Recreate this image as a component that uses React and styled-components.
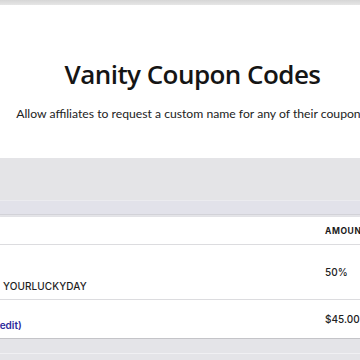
import React from 'react'
import styled, { createGlobalStyle } from 'styled-components'

const Global = createGlobalStyle`
    html, body {
        margin: 0;
        padding: 0;
        background: #e4e4e8;
        overflow: hidden;
    }
    body {
        width: 360px;
        height: 360px;
        font-family: "Open Sans", "Noto Sans", sans-serif;
        color: #1b1b1b;
    }
`

const rows = [
    { name: 'YOURLUCKYDAY', amount: '50%' },
    { name: '(edit)', amount: '$45.00', link: true },
]

function App() {
    return (
        <Page>
            <Global />
            <TopStrip />
            <Hero>
                <Title>Vanity Coupon Codes</Title>
                <Lead>Allow affiliates to request a custom name for any of their coupons.</Lead>
            </Hero>
            <Band />
            <SubBand />
            <Card>
                <HeadRow>
                    <NameCell />
                    <AmountHead>Amount</AmountHead>
                </HeadRow>
                <CodeRow>
                    <NameCell $top={29}>
                        <Code>{rows[0].name}</Code>
                    </NameCell>
                    <AmountCell $top={21}>{rows[0].amount}</AmountCell>
                </CodeRow>
                <EditRow>
                    <NameCell $top={13}>
                        <EditLink>{rows[1].name}</EditLink>
                    </NameCell>
                    <AmountCell $top={13}>{rows[1].amount}</AmountCell>
                </EditRow>
            </Card>
            <Footer>
                <FooterLine />
            </Footer>
        </Page>
    )
}

export default App

const Page = styled.div`
    display: flex;
    flex-direction: column;
    width: 360px;
    height: 360px;
    overflow: hidden;
`

const TopStrip = styled.div`
    height: 5px;
    flex-shrink: 0;
    background: linear-gradient(#d6d6d6, #e6e6e6);
`

const Hero = styled.div`
    width: 385px;
    height: 153px;
    flex-shrink: 0;
    background: #fff;
    display: flex;
    flex-direction: column;
    align-items: center;
    padding-top: 52px;
    box-sizing: border-box;
`

const Title = styled.h1`
    margin: 0;
    font-size: 26px;
    font-weight: 600;
    line-height: 34px;
    letter-spacing: -0.55px;
    color: #151515;
    white-space: nowrap;
`

const Lead = styled.p`
    margin: 15px 0 0;
    white-space: nowrap;
    font-family: Lato, "Open Sans", sans-serif;
    font-size: 12.2px;
    line-height: 16px;
    color: #222;
`

const Band = styled.div`
    height: 42px;
    flex-shrink: 0;
    background: #e4e4e7;
`

const SubBand = styled.div`
    height: 15px;
    flex-shrink: 0;
    background: #e2e2ea;
    border-top: 1px solid #ebebef;
    border-bottom: 1px solid #d2d2d8;
    box-sizing: border-box;
`

const Card = styled.div`
    flex-shrink: 0;
    background: #fff;
    margin-top: 2px;
    border-bottom: 1px solid #c4c4c8;
    box-shadow: 0 1px 2px rgba(0, 0, 0, 0.12);
    font-family: Inter, "Liberation Sans", sans-serif;
`

const Row = styled.div`
    display: grid;
    grid-template-columns: 1fr 35px;
    border-bottom: 1px solid #dcdcdf;
    &:last-child {
        border-bottom: none;
    }
`

const HeadRow = styled(Row)`
    height: 28px;
    box-sizing: border-box;
`

const CodeRow = styled(Row)`
    height: 55px;
    box-sizing: border-box;
`

const EditRow = styled(Row)`
    height: 38px;
    box-sizing: border-box;
`

const NameCell = styled.div`
    padding: ${p => p.$top || 0}px 0 0 3px;
    white-space: nowrap;
`

const AmountHead = styled.div`
    padding-top: 9px;
    font-size: 8.5px;
    font-weight: 700;
    letter-spacing: 0.6px;
    text-transform: uppercase;
    white-space: nowrap;
    color: #1a1a1a;
`

const AmountCell = styled.div`
    padding-top: ${p => p.$top}px;
    font-size: 10px;
    font-weight: 500;
    white-space: nowrap;
    color: #222;
`

const Code = styled.span`
    font-size: 10px;
    font-weight: 500;
    letter-spacing: 0.1px;
    color: #1e1e1e;
`

const EditLink = styled.a`
    display: inline-block;
    margin-left: -7px;
    font-size: 10px;
    font-weight: 600;
    color: #2d2a9c;
    cursor: pointer;
`

const Footer = styled.div`
    flex: 1;
    background: #e4e4e8;
    padding-top: 14px;
`

const FooterLine = styled.div`
    height: 1px;
    background: #f0f0f3;
`
